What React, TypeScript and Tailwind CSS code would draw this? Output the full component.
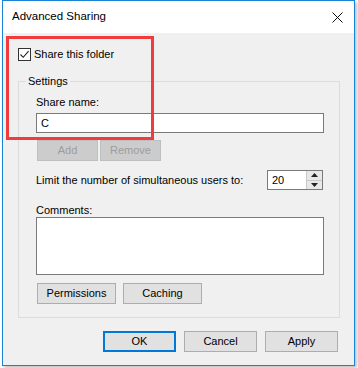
import React from "react";

const font = { fontFamily: '"Liberation Sans", Arial, sans-serif' };

const Btn = ({ label, w, disabled, primary }: { label: string; w: string; disabled?: boolean; primary?: boolean }) => (
  <div
    className={`${w} flex items-center justify-center text-[11px] leading-none ${
      disabled
        ? "h-[21px] border border-[#bfbfbf] bg-[#cccccc] text-[#9d9d9d]"
        : primary
        ? "h-[21px] border-2 border-[#0078d7] bg-[#e1e1e1] text-black"
        : "h-[21px] border border-[#adadad] bg-[#e1e1e1] text-black"
    }`}
  >
    {label}
  </div>
);

export default function App() {
  return (
    <div className="h-[368px] w-[358px] bg-white" style={font}>
      <div className="relative ml-[2px] flex h-[366px] w-[353px] flex-col border border-[#1883d7] bg-[#f0f0f0] shadow-[2px_2px_3px_rgba(0,0,0,0.25)]">
        {/* title bar */}
        <div className="flex h-[32px] items-center justify-between bg-white pl-[9px] pr-[11px]">
          <span className="text-[11.5px] text-black">Advanced Sharing</span>
          <svg width="11" height="11" viewBox="0 0 11 11" className="mt-[1px]">
            <path d="M0.5 0.5 L10.5 10.5 M10.5 0.5 L0.5 10.5" stroke="#111" strokeWidth="1" />
          </svg>
        </div>

        {/* body */}
        <div className="flex flex-col pl-[15px]">
          <div className="mt-[15px] flex items-center gap-[3px]">
            <div className="flex h-[13px] w-[13px] items-center justify-center border border-[#333] bg-white">
              <svg width="11" height="11" viewBox="0 0 11 11">
                <path d="M1.5 5.5 L4.2 8.3 L9.6 2.2" fill="none" stroke="#222" strokeWidth="1.1" />
              </svg>
            </div>
            <span className="text-[11px] leading-[13px] text-black">Share this folder</span>
          </div>

          {/* Settings group */}
          <div className="relative mt-[20px] flex h-[237px] w-[322px] flex-col border border-[#dcdcdc] pl-[17px]">
            <span className="absolute -top-[8px] left-[7px] bg-[#f0f0f0] px-[2px] text-[11px] leading-[14px] text-black">
              Settings
            </span>
            <span className="mt-[13px] text-[11px] leading-[14px] text-black">Share name:</span>
            <div className="mt-[4px] flex h-[20px] w-[288px] items-center border border-[#7a7a7a] bg-white pl-[4px] text-[11px] text-black">
              C
            </div>
            <div className="ml-[1px] mt-[7px] flex gap-[2px]">
              <Btn label="Add" w="w-[61px]" disabled />
              <Btn label="Remove" w="w-[61px]" disabled />
            </div>
            <div className="mt-[9px] flex w-[287px] items-center justify-between">
              <span className="text-[11px] leading-[14px] text-black">Limit the number of simultaneous users to:</span>
              <div className="flex h-[20px] w-[56px] items-stretch border border-[#7a7a7a] bg-white">
                <span className="flex flex-1 items-center pl-[4px] text-[11px] text-black">20</span>
                <div className="flex w-[16px] flex-col border-l border-[#c8c8c8] bg-[#e8e8e8]">
                  <div className="flex flex-1 items-center justify-center border-b border-[#c8c8c8]">
                    <svg width="7" height="4" viewBox="0 0 7 4"><path d="M0 4 L3.5 0 L7 4 Z" fill="#222" /></svg>
                  </div>
                  <div className="flex flex-1 items-center justify-center">
                    <svg width="7" height="4" viewBox="0 0 7 4"><path d="M0 0 L3.5 4 L7 0 Z" fill="#222" /></svg>
                  </div>
                </div>
              </div>
            </div>
            <span className="mt-[14px] text-[11px] leading-[13px] text-black">Comments:</span>
            <div className="h-[58px] w-[288px] border border-[#7a7a7a] bg-white" />
            <div className="ml-[1px] mt-[8px] flex gap-[7px]">
              <Btn label="Permissions" w="w-[79px]" />
              <Btn label="Caching" w="w-[79px]" />
            </div>
          </div>

          <div className="mt-[13px] flex gap-[8px] pl-[85px]">
            <Btn label="OK" w="w-[73px]" primary />
            <Btn label="Cancel" w="w-[73px]" />
            <Btn label="Apply" w="w-[73px]" />
          </div>
        </div>

        {/* highlight */}
        <div className="absolute left-[3px] top-[35px] h-[104px] w-[148px] border-[3px] border-[#f03c3c]" />
      </div>
    </div>
  );
}
